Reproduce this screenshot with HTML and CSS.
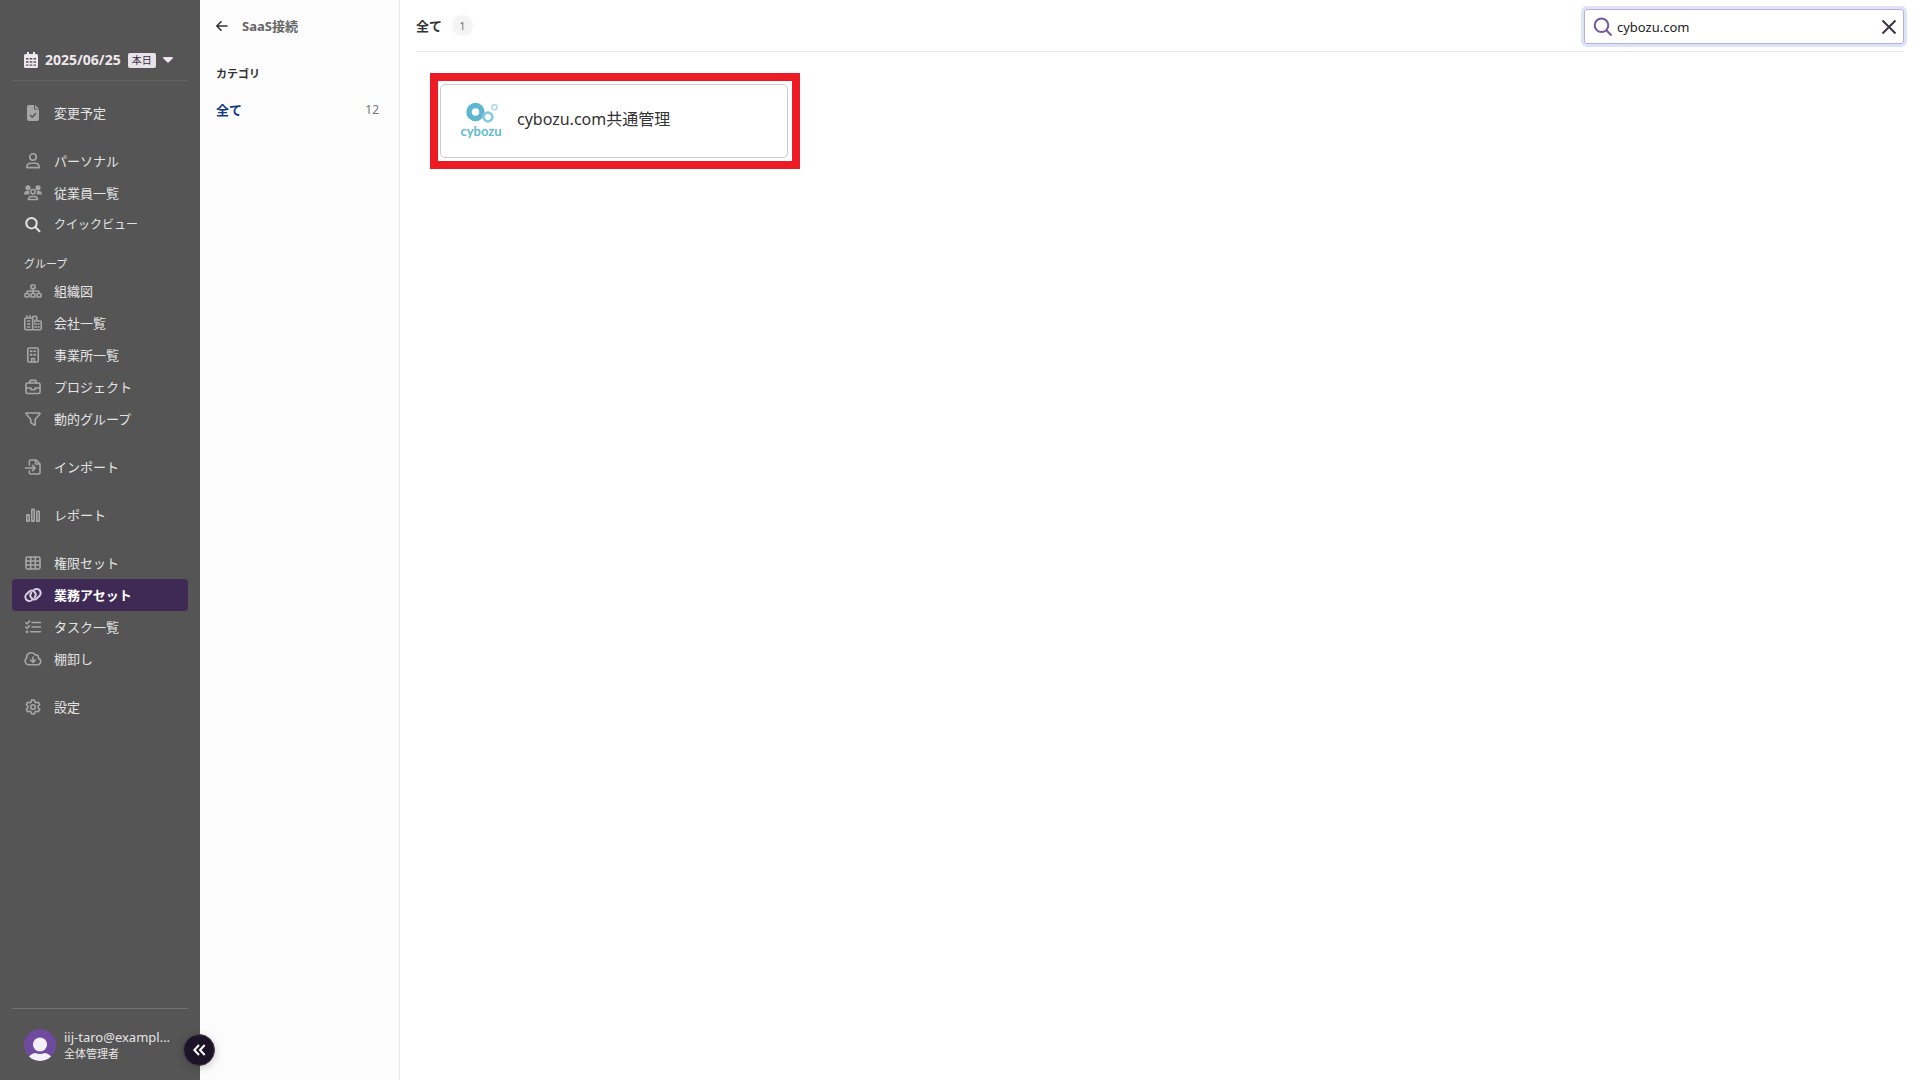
FILE: index.html
```html
<!DOCTYPE html>
<html lang="ja">
<head>
    <meta charset="UTF-8">
    <meta name="viewport" content="width=device-width, initial-scale=1.0">
    <title>SaaS接続</title>
    <link rel="stylesheet" href="styles.css">
</head>
<body>

    <aside class="sidebar">
        <button type="button" class="date-picker">
            <svg class="calendar" width="14" height="16" viewBox="0 0 14 16">
                <path fill="currentColor" fill-rule="evenodd" d="M3 0h2v2h4V0h2v2h1.500a1.500 1.500 0 0 1 1.500 1.500V14.500a1.500 1.500 0 0 1-1.500 1.500h-11A1.500 1.500 0 0 1 0 14.500v-11A1.500 1.500 0 0 1 1.500 2H3zM2 6v1.500h2.500V6zM5.700 6v1.500h2.600V6zM9.500 6v1.500H12V6zM2 9.200v1.500h2.500V9.200zM5.700 9.200v1.500h2.600V9.200zM9.500 9.200v1.500H12V9.200zM2 12.400V13.800h2.500v-1.400zM5.700 12.400V13.800h2.600v-1.400zM9.500 12.400V13.800H12v-1.400z"/>
            </svg>
            <span class="date">2025/06/25</span>
            <span class="today">本日</span>
            <svg width="10" height="6" viewBox="0 0 10 6"><path fill="currentColor" d="M1 0h8q1.500.3.6 1.400L5.800 5.300q-.8.700-1.600 0L.4 1.400Q-.5.300 1 0z"/></svg>
        </button>

        <nav class="menu">
            <ul>
                <li><a href="#">
                    <svg class="icon" viewBox="0 0 18 16"><path fill="currentColor" d="M5 0h5v4.500h5V14a2 2 0 0 1-2 2H5a2 2 0 0 1-2-2V2a2 2 0 0 1 2-2zM11 0l4 3.700h-4z"/><path class="cut" d="M6 10l2.200 2.200L12 8.200"/></svg>
                    変更予定</a></li>
            </ul>
            <ul>
                <li><a href="#">
                    <svg class="icon line" viewBox="0 0 18 16"><circle cx="9" cy="4" r="3.200"/><path d="M2.800 14.600c0-2.900 1.700-4.400 4-4.400h4.400c2.300 0 4 1.500 4 4.400z"/></svg>
                    パーソナル</a></li>
                <li><a href="#">
                    <svg class="icon" viewBox="0 0 18 16"><g fill="currentColor"><circle cx="4" cy="2.800" r="2.600"/><circle cx="14" cy="2.800" r="2.600"/><path d="M0 9.500C0 7 1.200 6 3 6h2.200q-.6 2 .5 3.500zM18 9.500C18 7 16.800 6 15 6h-2.200q.6 2-.5 3.500z"/></g><g class="line"><circle cx="9" cy="6.700" r="2.200"/><path d="M4.500 14.500c0-2 1-3 2.800-3h3.400c1.800 0 2.800 1 2.800 3z"/></g></svg>
                    従業員一覧</a></li>
                <li><button type="button" class="quick-view">
                    <svg class="icon line bright" viewBox="0 0 18 16"><circle cx="7.500" cy="6.200" r="5.200"/><path d="M11.300 10l4.200 4.300"/></svg>
                    クイックビュー</button></li>
            </ul>
            <h2>グループ</h2>
            <ul>
                <li><a href="#">
                    <svg class="icon line" viewBox="0 0 18 16"><rect x="7" y="2" width="4" height="3.500" rx=".8"/><rect x="1" y="10.500" width="4" height="3.500" rx=".8"/><rect x="7" y="10.500" width="4" height="3.500" rx=".8"/><rect x="13" y="10.500" width="4" height="3.500" rx=".8"/><path d="M9 5.500v5M3 10.500V9q0-1 1-1h10q1 0 1 1v1.500"/></svg>
                    組織図</a></li>
                <li><a href="#">
                    <svg class="icon line" viewBox="0 0 18 16"><path d="M8 14.800H2A1.300 1.300 0 0 1 .8 13.500V4.200Q.8 3 2 3h5.500M3 3V.8M6 3V.8M8.700 13.500v-11q0-1.300 1.300-1.300h1.500q1.300 0 1.300 1.300V6H16q1.200 0 1.200 1.300v6.200q0 1.300-1.200 1.300h-6q-1.300 0-1.300-1.300"/><path d="M3.800 6h2M3.800 9h2M3.800 12h2M10.800 5v2M10.800 9h1.500M14 9h1M10.800 12h1.500M14 12h1"/></svg>
                    会社一覧</a></li>
                <li><a href="#">
                    <svg class="icon line" viewBox="0 0 18 16"><rect x="3.800" y="1" width="10.500" height="14" rx="1.300"/><path d="M6.700 4.200h1M10.300 4.200h1M6.700 7.700h1M10.300 7.700h1" stroke-width="2"/><path d="M7.700 15v-3.500h2.700V15"/></svg>
                    事業所一覧</a></li>
                <li><a href="#">
                    <svg class="icon line" viewBox="0 0 18 16"><rect x="2" y="4" width="14" height="10.500" rx="1.500"/><path d="M5.800 4V2.200q0-.8.8-.8h4.800q.8 0 .8.8V4M2 9h5v1.700h4V9h5"/></svg>
                    プロジェクト</a></li>
                <li><a href="#">
                    <svg class="icon line" viewBox="0 0 18 16"><path d="M2.600 2h12.800q.9.200.4 1L11.200 8.500v5q-.2.900-1 .4L7.200 12q-.4-.3-.4-.8V8.500L2.200 3q-.5-.8.4-1z"/></svg>
                    動的グループ</a></li>
            </ul>
            <ul>
                <li><a href="#">
                    <svg class="icon line" viewBox="0 0 18 16"><path d="M5.300 6V2.500Q5.300 1 6.700 1H12l4 3.800v8.700q0 1.500-1.400 1.500H6.700q-1.400 0-1.400-1.500V12M11.500 1v4H16M1.500 9H11M8.500 6.300L11.300 9l-2.800 2.700"/></svg>
                    インポート</a></li>
            </ul>
            <ul>
                <li><a href="#">
                    <svg class="icon" viewBox="0 0 18 16"><g fill="currentColor" fill-rule="evenodd"><path d="M3 7h2q1 0 1 1v6q0 1-1 1H3q-1 0-1-1V8q0-1 1-1zM3.600 8.700v4.600h.8V8.700z"/><path d="M8 1.500h2q1 0 1 1V14q0 1-1 1H8q-1 0-1-1V2.500q0-1 1-1zM8.600 3.200v10.100h.8V3.200z"/><path d="M13 3.500h2q1 0 1 1V14q0 1-1 1h-2q-1 0-1-1V4.500q0-1 1-1zM13.600 5.200v8.100h.8V5.200z"/></g></svg>
                    レポート</a></li>
            </ul>
            <ul>
                <li><a href="#">
                    <svg class="icon line" viewBox="0 0 18 16"><rect x="2" y="2" width="14" height="12" rx="1.500"/><path d="M2 6h14M2 10h14M6.700 2v12M11.300 2v12"/></svg>
                    権限セット</a></li>
                <li><a href="#" class="active">
                    <svg class="icon line" viewBox="0 0 18 16"><g stroke-width="2"><path d="M8.500 12.500A3.900 3.900 0 0 1 2.200 7.500L5 4.800a3.900 3.900 0 0 1 5.700 5.300"/><path d="M9.500 3.500a3.900 3.900 0 0 1 6.300 5L13 11.200a3.900 3.900 0 0 1-5.700-5.300"/></g></svg>
                    業務アセット</a></li>
                <li><a href="#">
                    <svg class="icon line" viewBox="0 0 18 16"><path d="M8 3.500h8.500M8 8h8.500M6.500 12.800h10M1.800 3.500L3.200 4.800 5.600 2M1.800 8l1.400 1.300 2.400-2.800"/><circle cx="3" cy="12.800" r=".6"/></svg>
                    タスク一覧</a></li>
                <li><a href="#">
                    <svg class="icon line" viewBox="0 0 18 16"><path d="M4.500 13.800A3.700 3.700 0 0 1 2.600 7.200 4.800 4.800 0 0 1 11.400 4q2.500-.6 3 1.800.1.700-.1 1.400a3.400 3.400 0 0 1-.5 6.600zM9 6v5.300M6.600 9L9 11.400 11.400 9"/></svg>
                    棚卸し</a></li>
            </ul>
            <ul>
                <li><a href="#">
                    <svg class="icon line" viewBox="0 0 18 16"><path d="M7.600 1h2.800l.5 2 1.400.8 2-.6 1.400 2.400L14.200 7v2l1.500 1.400-1.400 2.400-2-.6-1.400.8-.5 2H7.600l-.5-2-1.400-.8-2 .6-1.400-2.400L3.800 9V7L2.300 5.600l1.400-2.400 2 .6L7.100 3z"/><circle cx="9" cy="8" r="2.300"/></svg>
                    設定</a></li>
            </ul>
        </nav>

        <div class="account">
            <svg class="avatar" width="32" height="32" viewBox="0 0 32 32">
                <circle cx="16" cy="16" r="16" fill="#6f4a9e"/>
                <circle cx="16" cy="15.500" r="7" fill="#f3f0f6"/>
                <path fill="#f3f0f6" d="M5 27.500q3-3.500 6.500-3.500 4.500 2 9 0 3.500 0 6.500 3.500A16 16 0 0 1 5 27.500z"/>
            </svg>
            <div class="account-text">
                <div class="mail">iij-taro@exampl...</div>
                <div class="role">全体管理者</div>
            </div>
        </div>
        <button type="button" class="collapse" aria-label="メニューを閉じる">
            <svg width="13" height="12" viewBox="0 0 13 12"><path d="M6 1L1.300 6 6 11M11.700 1L7 6l4.700 5"/></svg>
        </button>
    </aside>

    <section class="categories">
        <a href="#" class="back">
            <svg width="12" height="12" viewBox="0 0 12 12"><path d="M11.500 6H1M5.500 1.200L.8 6l4.700 4.800"/></svg>
            SaaS接続
        </a>
        <h2>カテゴリ</h2>
        <a href="#" class="category"><b>全て</b><span>12</span></a>
    </section>

    <main>
        <header>
            <h1>全て</h1>
            <span class="count">1</span>
            <form class="search">
                <svg width="20" height="20" viewBox="0 0 20 20"><circle cx="8.500" cy="8.300" r="6.800"/><path d="M13.300 13.200l5.200 5.300"/></svg>
                <input type="text" aria-label="検索" value="cybozu.com">
                <button type="reset" aria-label="クリア">
                    <svg width="16" height="16" viewBox="0 0 16 16"><path d="M1.500 1.500l13 13M14.500 1.500l-13 13"/></svg>
                </button>
            </form>
        </header>

        <div class="services">
            <div class="highlight">
                <a href="#" class="card">
                    <svg class="logo" width="42" height="42" viewBox="0 0 42 42">
                        <circle cx="15.500" cy="12" r="6.500" fill="none" stroke="#5fb6d0" stroke-width="5.400"/>
                        <circle cx="28" cy="17" r="4.300" fill="none" stroke="#8dcbdc" stroke-width="2.800"/>
                        <circle cx="34.500" cy="7.200" r="2.600" fill="none" stroke="#b5dde8" stroke-width="1.600"/>
                        <text x="21" y="36" text-anchor="middle">cybozu</text>
                    </svg>
                    <span>cybozu.com共通管理</span>
                </a>
            </div>
        </div>
    </main>

</body>
</html>
```
FILE: styles.css
```css
* {
    box-sizing: border-box;
}

body {
    margin: 0;
    min-height: 100vh;
    display: flex;
    font-family: "Noto Sans", "Noto Sans CJK JP", sans-serif;
    font-size: 13px;
    line-height: 20px;
    color: #333;
    background: #fff;
}

a {
    color: inherit;
    text-decoration: none;
}

button {
    font: inherit;
    color: inherit;
    background: none;
    border: 0;
    padding: 0;
    cursor: pointer;
}

h1, h2, ul {
    margin: 0;
    padding: 0;
    list-style: none;
}

/* Sidebar */
.sidebar {
    position: relative;
    flex: none;
    width: 200px;
    padding: 40px 12px 0;
    display: flex;
    flex-direction: column;
    background: #555;
    color: #e4e4e4;
}

.date-picker {
    display: flex;
    align-items: center;
    gap: 7px;
    height: 41px;
    padding: 0 12px;
    border-bottom: 1px solid #636363;
    color: #eee8ee;
}

.calendar {
    flex: none;
}

.date {
    font-size: 14px;
    font-weight: bold;
}

.today {
    padding: 0 4px;
    border-radius: 2px;
    background: #e8e2e9;
    color: #352a3d;
    font-size: 10px;
    line-height: 15px;
    white-space: nowrap;
}

.menu {
    flex: 1;
    padding-top: 16px;
}

.menu ul {
    margin-bottom: 16px;
}

.menu h2 {
    margin-top: -4px;
    padding-left: 12px;
    font-size: 11px;
    font-weight: normal;
    line-height: 22px;
}

.menu a,
.menu button {
    display: flex;
    align-items: center;
    gap: 12px;
    width: 100%;
    height: 32px;
    padding: 0 12px;
    border-radius: 4px;
    white-space: nowrap;
}

.menu .quick-view {
    font-size: 12px;
}

.menu .active {
    background: #3f2a56;
    color: #fff;
    font-weight: bold;
}

.icon {
    flex: none;
    width: 18px;
    height: 16px;
    color: #a6a6a6;
}

.active .icon {
    color: #d9cfe2;
}

.line {
    fill: none;
    stroke: currentColor;
    stroke-width: 1.6;
    stroke-linecap: round;
    stroke-linejoin: round;
}

.icon.bright {
    color: #e4e4e4;
    stroke-width: 2;
}

.cut {
    fill: none;
    stroke: #555;
    stroke-width: 1.5;
}

.account {
    display: flex;
    align-items: center;
    gap: 8px;
    height: 72px;
    padding: 0 12px;
    border-top: 1px solid #707070;
}

.avatar {
    flex: none;
}

.mail {
    white-space: nowrap;
    line-height: 18px;
}

.role {
    font-size: 11px;
    line-height: 16px;
}

.collapse {
    position: absolute;
    right: -15px;
    bottom: 14px;
    width: 32px;
    height: 32px;
    display: flex;
    align-items: center;
    justify-content: center;
    border: 1px solid #45404a;
    border-radius: 50%;
    background: #1d1329;
    box-shadow: 0 2px 8px rgba(0, 0, 0, 0.2);
}

.collapse svg {
    fill: none;
    stroke: #fff;
    stroke-width: 2;
}

/* Category list */
.categories {
    flex: none;
    width: 200px;
    padding: 16px 20px 0 16px;
    border-right: 1px solid #e6e6e6;
    background: #fcfcfc;
}

.back {
    display: flex;
    align-items: center;
    gap: 14px;
    color: #666;
    font-weight: bold;
}

.back svg {
    fill: none;
    stroke: #333;
    stroke-width: 1.5;
}

.categories h2 {
    margin: 28px 0 16px;
    font-size: 11px;
}

.category {
    display: flex;
    justify-content: space-between;
    color: #777;
}

.category b {
    color: #143a80;
}

.category span {
    font-size: 12px;
}

/* Service list */
main {
    flex: 1;
    min-width: 0;
}

header {
    display: flex;
    align-items: center;
    height: 52px;
    margin: 0 16px;
    border-bottom: 1px solid #e6e6e6;
}

h1 {
    font-size: 13px;
}

.count {
    width: 21px;
    margin-left: 10px;
    border-radius: 50%;
    background: #f4f4f4;
    color: #777;
    font-size: 11px;
    line-height: 21px;
    text-align: center;
}

.search {
    display: flex;
    align-items: center;
    width: 320px;
    height: 35px;
    margin-top: 2px;
    margin-left: auto;
    padding: 0 6px 0 8px;
    border: 1px solid #b3b0dd;
    border-radius: 3px;
    box-shadow: 0 0 0 3px #dfe3f7;
}

.search svg {
    display: block;
    fill: none;
    stroke: #75589b;
    stroke-width: 2;
}

.search input {
    flex: 1;
    min-width: 0;
    padding: 0 0 0 4px;
    border: 0;
    outline: 0;
    background: none;
    font: inherit;
    color: #222;
}

.search button svg {
    stroke: #3b3542;
}

.services {
    display: grid;
    grid-template-columns: repeat(auto-fill, minmax(350px, 1fr));
    padding: 21px 10px 0 30px;
}

.highlight {
    padding: 3px 4px 3px 2px;
    border: 8px solid #ed1c24;
}

.card {
    display: flex;
    align-items: center;
    gap: 15px;
    height: 74px;
    padding: 0 19px;
    border: 1px solid #ccc;
    border-radius: 5px;
    font-size: 16px;
}

.card span {
    padding-bottom: 4px;
}

.logo text {
    fill: #62bccb;
    font-family: Lato, sans-serif;
    font-size: 13px;
    font-weight: bold;
}
```
